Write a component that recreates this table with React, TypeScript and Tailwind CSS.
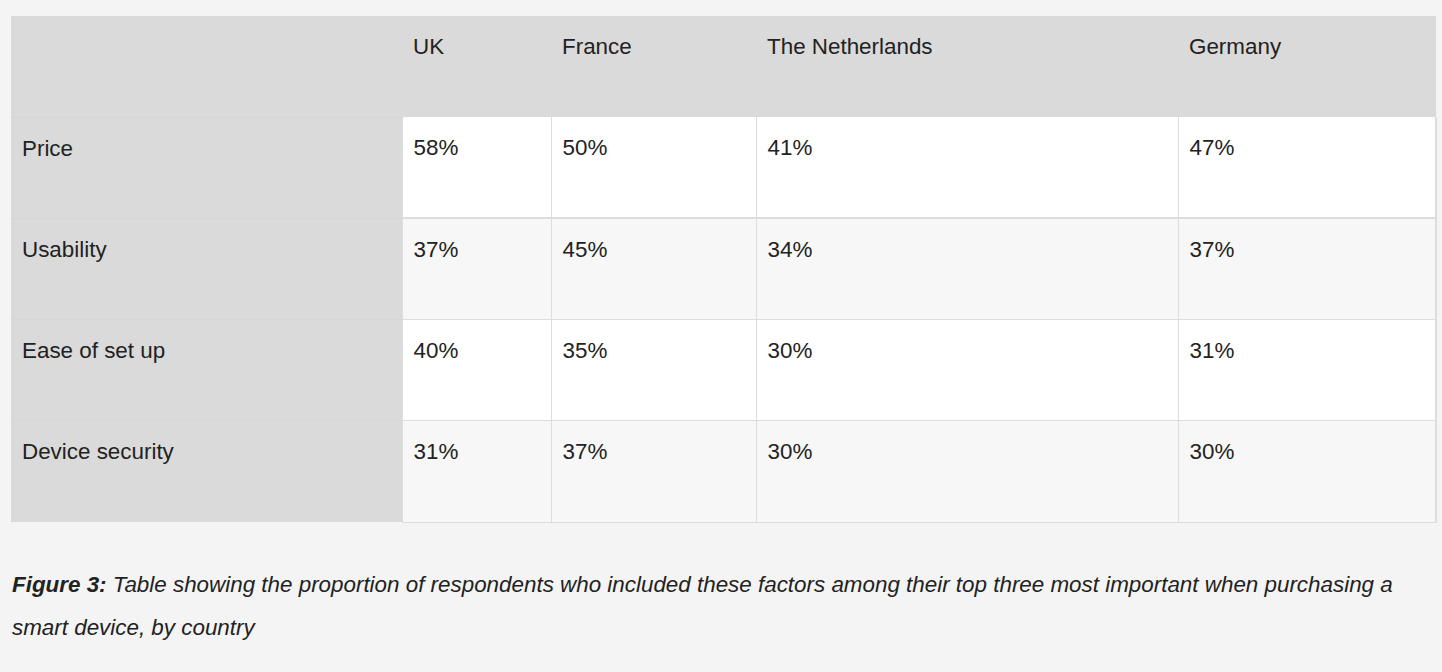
import React from "react";

const rows = [
  { label: "Price", vals: ["58%", "50%", "41%", "47%"], bg: "bg-white" },
  { label: "Usability", vals: ["37%", "45%", "34%", "37%"], bg: "bg-[#f7f7f7]" },
  { label: "Ease of set up", vals: ["40%", "35%", "30%", "31%"], bg: "bg-white" },
  { label: "Device security", vals: ["31%", "37%", "30%", "30%"], bg: "bg-[#f7f7f7]" },
];

export default function App() {
  return (
    <div
      className="min-h-[672px] w-full bg-[#f4f4f4] pl-[11px] pr-[6px] pt-[16px] text-[#222] text-[22.4px]"
      style={{ fontFamily: '"Liberation Sans", Arial, sans-serif' }}
    >
      <table className="table-fixed border-collapse w-[1425px]">
        <colgroup>
          <col className="w-[391px]" />
          <col className="w-[149px]" />
          <col className="w-[205px]" />
          <col className="w-[422px]" />
          <col className="w-[258px]" />
        </colgroup>
        <thead>
          <tr className="h-[101px] bg-[#dadada]">
            <th className="align-top text-left font-normal pl-[11px] pr-[10px] pt-[11px] leading-[40px]"></th>
            {["UK", "France", "The Netherlands", "Germany"].map((h) => (
              <th key={h} className="align-top text-left font-normal pl-[11px] pr-[10px] pt-[11px] leading-[40px]">
                {h}
              </th>
            ))}
          </tr>
        </thead>
        <tbody>
          {rows.map((r, i) => (
            <tr key={r.label} className={`h-[101px] ${r.bg}`}>
              <td className="align-top bg-[#dadada] pl-[11px] pr-[10px] pt-[11px] leading-[40px] border-t border-[#d6d6d6]">
                {r.label}
              </td>
              {r.vals.map((v, j) => (
                <td
                  key={j}
                  className={`align-top pl-[11px] pr-[10px] pt-[11px] leading-[40px] border border-[#dddddd] ${
                    j === 3 ? "border-r-2" : ""
                  } ${i === 0 ? "border-b-2 border-t-0" : ""} ${i === 3 ? "h-[102px]" : ""}`}
                >
                  {v}
                </td>
              ))}
            </tr>
          ))}
        </tbody>
      </table>
      <p className="mt-[40px] pl-[1px] italic leading-[43px] w-[1420px]">
        <b>Figure 3:</b> Table showing the proportion of respondents who included these factors among their top three most important when purchasing a smart device, by country
      </p>
    </div>
  );
}
